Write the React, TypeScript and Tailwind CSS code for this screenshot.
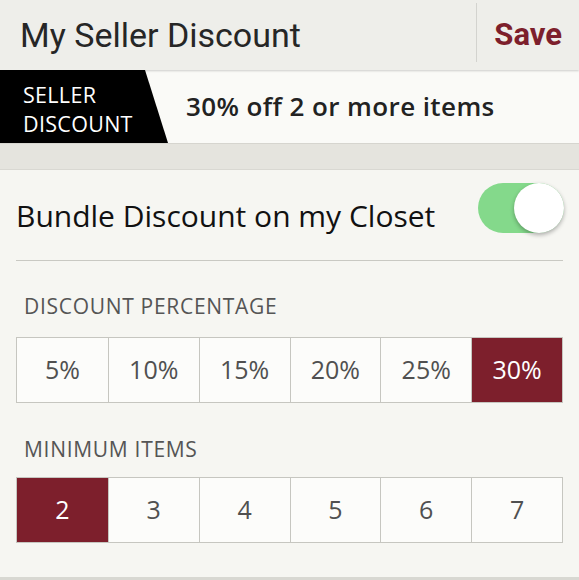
import React from "react";

const percents = ["5%", "10%", "15%", "20%", "25%", "30%"];
const items = ["2", "3", "4", "5", "6", "7"];

function Segmented({ options, selected }: { options: string[]; selected: string }) {
  return (
    <div className="grid grid-cols-6 h-[66px] border border-[#c6c6c0] bg-[#fcfcfa]">
      {options.map((o, i) => {
        const on = o === selected;
        return (
          <div
            key={o}
            className={
              "flex items-center justify-center text-[25px] " +
              (i > 0 ? "border-l border-[#c6c6c0] " : "") +
              (on ? "bg-[#7d1f2c] text-white" : "text-[#505050]")
            }
          >
            {o}
          </div>
        );
      })}
    </div>
  );
}

export default function App() {
  return (
    <div
      className="w-[579px] h-[580px] overflow-hidden bg-[#f6f6f2] flex flex-col"
      style={{ fontFamily: "'Open Sans', Lato, sans-serif" }}
    >
      {/* app bar */}
      <header className="h-[70px] shrink-0 flex items-stretch bg-[#eeeeea] shadow-[0_1px_2px_rgba(0,0,0,0.18)] z-10 font-['Roboto',sans-serif]">
        <div className="flex-1 flex items-center pl-[20px] text-[34px] text-[#262626]">My Seller Discount</div>
        <div className="w-px mt-[3px] mb-[8px] bg-[#d3d3cf]" />
        <div className="flex items-center px-[17px] text-[31px] font-bold text-[#7d1f2c]">Save</div>
      </header>

      {/* discount banner */}
      <div className="h-[73px] shrink-0 flex items-center bg-[#fafaf7]">
        <div className="h-full w-[168px] bg-black [clip-path:polygon(0_0,145px_0,168px_100%,0_100%)] flex flex-col justify-center pt-[4px] pl-[23px] text-white text-[21.5px] leading-[29px] tracking-[0.3px]">
          <span>SELLER</span>
          <span>DISCOUNT</span>
        </div>
        <div className="ml-[18px] text-[26px] font-semibold tracking-[0.4px] text-[#222]">30% off 2 or more items</div>
      </div>

      {/* textured gap */}
      <div className="h-[27px] shrink-0 bg-[#e5e4de] border-t border-[#d6d5cf] border-b border-b-[#d9d8d2]" />

      {/* settings card */}
      <div className="flex-1 px-[16px] bg-[#f6f6f2]">
        <div className="h-[90px] flex items-center justify-between">
          <span className="text-[30px] text-[#111]">Bundle Discount on my Closet</span>
          <div className="relative shrink-0 w-[86px] h-[50px] mr-[-1px] mt-[-14px] rounded-full bg-[#84d98b]">
            <div className="absolute right-0 top-0 w-[50px] h-[50px] rounded-full bg-white shadow-[0_2px_4px_rgba(0,0,0,0.3)]" />
          </div>
        </div>
        <div className="h-px bg-[#c9c9c3]" />

        <div className="mt-[33px] pl-[8px] text-[21px] leading-[24px] tracking-[0.7px] text-[#555]">DISCOUNT PERCENTAGE</div>
        <div className="mt-[19px]">
          <Segmented options={percents} selected="30%" />
        </div>

        <div className="mt-[34px] pl-[8px] text-[21px] leading-[24px] tracking-[0.7px] text-[#555]">MINIMUM ITEMS</div>
        <div className="mt-[16px]">
          <Segmented options={items} selected="2" />
        </div>
      </div>
      <div className="h-[3px] shrink-0 bg-[#d8d8d2]" />
    </div>
  );
}
